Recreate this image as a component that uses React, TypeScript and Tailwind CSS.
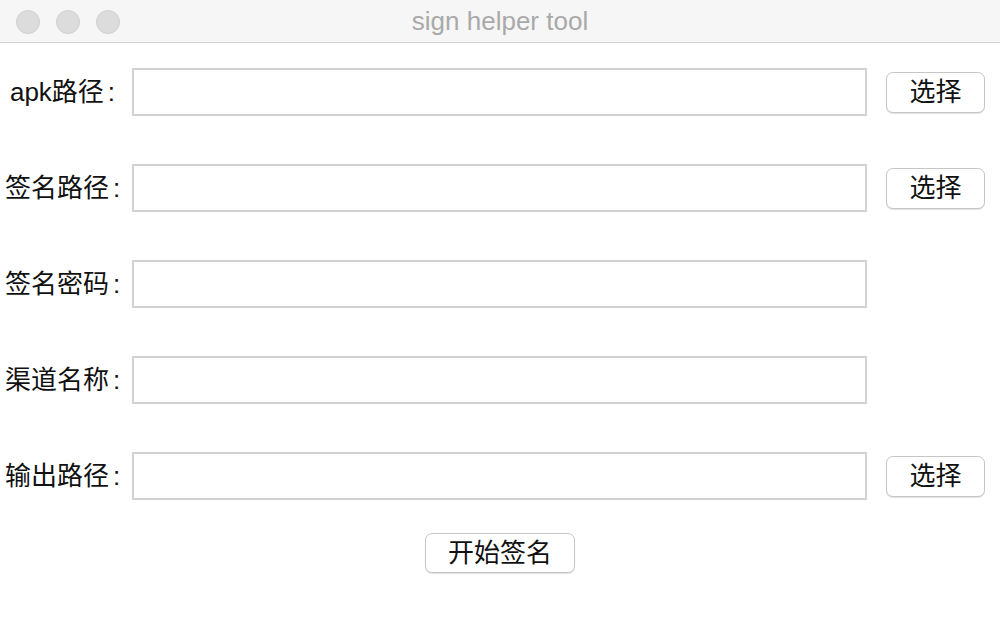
import React from 'react';

const font = { fontFamily: '"Liberation Sans", "Noto Sans CJK SC", sans-serif' };

interface RowProps {
  label: string;
  withButton?: boolean;
}

const FieldRow: React.FC<RowProps> = ({ label, withButton }) => (
  <div className="flex items-center h-[48px]">
    <div className="w-[125px] flex justify-center items-center text-[26px] text-[#111]">
      <span>{label}</span>
      <span className="ml-[4px]">:</span>
    </div>
    <input
      type="text"
      className="ml-[7px] w-[735px] h-[48px] border-2 border-[#d2d2d2] bg-white outline-none"
    />
    {withButton && (
      <button className="ml-[19px] w-[99px] h-[41px] rounded-[7px] border border-[#c6c6c6] bg-white text-[26px] leading-none text-[#111] shadow-[0_1px_1px_rgba(0,0,0,0.12)]">
        选择
      </button>
    )}
  </div>
);

export default function App() {
  return (
    <div className="w-[1000px] h-[644px] bg-white overflow-hidden" style={font}>
      {/* 標題列 */}
      <div className="relative h-[43px] bg-[#f6f6f6] border-b border-[#d3d3d3] flex items-center justify-center">
        <div className="absolute left-[16px] top-[10px] flex gap-[16px]">
          <span className="w-[24px] h-[24px] rounded-full bg-[#dcdcdc] border border-[#d0d0d0]"></span>
          <span className="w-[24px] h-[24px] rounded-full bg-[#dcdcdc] border border-[#d0d0d0]"></span>
          <span className="w-[24px] h-[24px] rounded-full bg-[#dcdcdc] border border-[#d0d0d0]"></span>
        </div>
        <span className="text-[26px] text-[#a9a9a9] leading-none">sign helper tool</span>
      </div>

      <div className="flex flex-col gap-[48px] pt-[25px]">
        <FieldRow label="apk路径" withButton />
        <FieldRow label="签名路径" withButton />
        <FieldRow label="签名密码" />
        <FieldRow label="渠道名称" />
        <FieldRow label="输出路径" withButton />
      </div>

      <div className="flex justify-center mt-[33px]">
        <button className="w-[150px] h-[40px] rounded-[7px] border border-[#c6c6c6] bg-white text-[26px] leading-none text-[#111] shadow-[0_1px_1px_rgba(0,0,0,0.12)]">
          开始签名
        </button>
      </div>
    </div>
  );
}
